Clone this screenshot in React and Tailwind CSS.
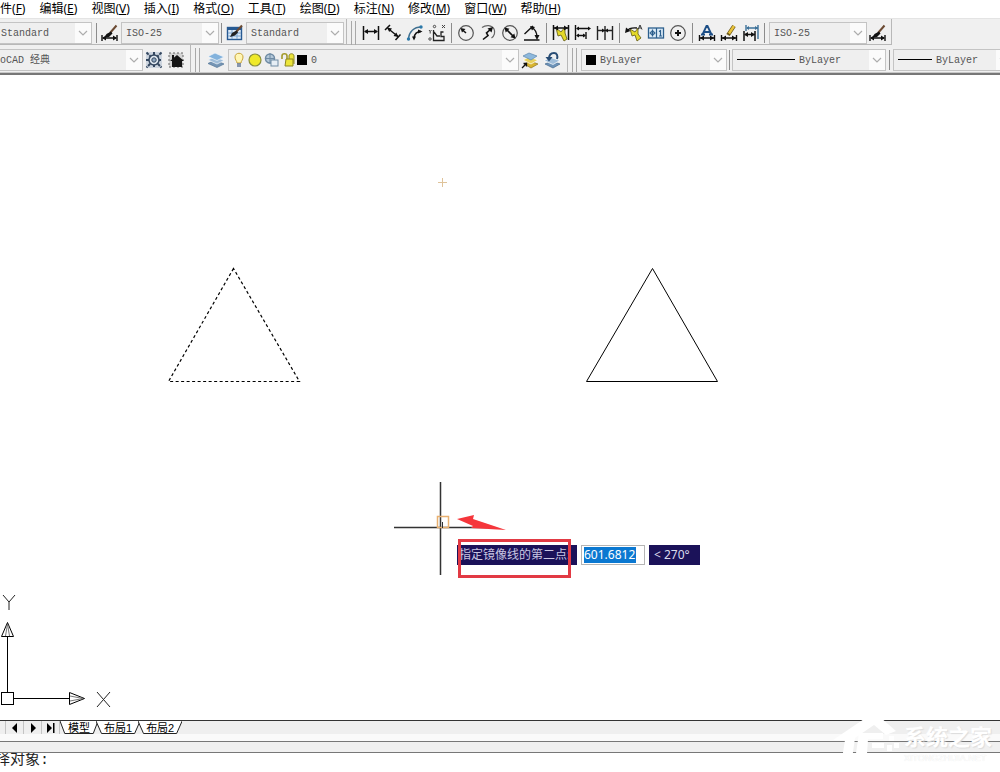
import { useState } from 'react';
import clsx from 'clsx';

const MENUS = [
  { label: '文件', key: 'F' },
  { label: '编辑', key: 'E' },
  { label: '视图', key: 'V' },
  { label: '插入', key: 'I' },
  { label: '格式', key: 'O' },
  { label: '工具', key: 'T' },
  { label: '绘图', key: 'D' },
  { label: '标注', key: 'N' },
  { label: '修改', key: 'M' },
  { label: '窗口', key: 'W' },
  { label: '帮助', key: 'H' },
];

const TABS = ['模型', '布局1', '布局2'];

// 18x18 toolbar glyphs
const ICONS = {
  dimStyle: (
    <>
      <path d="M1 11v6M16 11v6M2 14h13" stroke="#111" strokeWidth="1.4" />
      <path d="M1 14l4-2.5v5zM16 14l-4-2.5v5z" fill="#111" />
      <path d="M15.500 1.500L9 9" stroke="#6b4a32" strokeWidth="2" />
      <path d="M10 7.500L5.500 10 3 14l5-1 3.500-3.500z" fill="#111" />
    </>
  ),
  tableStyle: (
    <>
      <rect x="1.500" y="3.500" width="14" height="12" fill="#dceaf8" stroke="#285a92" strokeWidth="1.400" />
      <path d="M1.500 5h14" stroke="#285a92" strokeWidth="2" />
      <path d="M2 9h13M2 12h13M6 6v9M11 6v9" stroke="#7ba4cf" />
      <path d="M16 1.500L10 8" stroke="#6b4a32" strokeWidth="2" />
      <path d="M10.500 6.500L6 9l-2 4 5-1.500 3-3z" fill="#222" />
    </>
  ),
  linear: (
    <>
      <path d="M1.500 2v14M16.500 2v14" stroke="#111" strokeWidth="1.500" />
      <path d="M3 7.500h12" stroke="#111" strokeWidth="1.500" />
      <path d="M2 7.500l4-2.500v5zM16 7.500l-4-2.500v5z" fill="#111" />
    </>
  ),
  aligned: (
    <>
      <path d="M6 1L1 6M16.500 10.500l-5 5.500M4 4.500l10 8" stroke="#111" strokeWidth="1.500" />
      <path d="M3 3.500l5 1-2.800 3.500zM14.500 13l-5-1 2.800-3.500z" fill="#111" />
    </>
  ),
  arcLength: (
    <>
      <path d="M2.500 14.500C3 8 8 3 15 3" stroke="#3f6f8f" strokeWidth="1.300" />
      <path d="M8 14C8.500 10 11 7.500 15 7.500" stroke="#111" strokeWidth="1.500" />
      <path d="M6 12.500h4l-2 4zM12 5.500l4.500 2-4.500 2z" fill="#111" />
      <circle cx="2.500" cy="15" r="1.700" fill="#2b78a8" />
      <circle cx="15" cy="3" r="1.700" fill="#2b78a8" />
    </>
  ),
  ordinate: (
    <>
      <path d="M5.500 6v10.500H16v-4h-3V8h2.500M6 8l3 4h3" stroke="#222" strokeWidth="1.300" />
      <circle cx="6.500" cy="2.500" r="1.200" stroke="#444" />
      <circle cx="2" cy="15" r="1.200" stroke="#444" />
      <path d="M14 1l3 3M17 1l-3 3M1 6l1.200 1.500L3.500 6M2.200 7.500v2" stroke="#444" />
    </>
  ),
  radius: (
    <>
      <circle cx="9" cy="9" r="7.300" stroke="#555" strokeWidth="1.200" />
      <path d="M9 9L5 5.500" stroke="#111" strokeWidth="1.500" />
      <path d="M3.500 4l5 1-3.500 3.500z" fill="#111" />
    </>
  ),
  jogged: (
    <>
      <path d="M3 3.500C7 .5 13 1 15 5c1.500 3 .5 7-2.500 9" stroke="#666" strokeWidth="1.200" />
      <path d="M4 15.500l5-4-1.500-2.500L12 5" stroke="#111" strokeWidth="1.600" />
      <path d="M14 3l-1.500 5.500-4-4z" fill="#111" />
    </>
  ),
  diameter: (
    <>
      <circle cx="9" cy="9" r="7.300" stroke="#555" strokeWidth="1.200" />
      <path d="M5 5l8 8" stroke="#111" strokeWidth="1.600" />
      <path d="M3.500 3.500l5 1.200-3.800 3.800zM14.500 14.500l-5-1.200 3.800-3.800z" fill="#111" />
    </>
  ),
  angular: (
    <>
      <path d="M1 16h15.500M1.500 10L10 2" stroke="#111" strokeWidth="1.400" />
      <path d="M8.500 3.500c3.500 1.500 5.500 5 5.500 10" stroke="#111" strokeWidth="1.300" />
      <path d="M7 2l5 1-3 3.500zM11.500 11h5L14 16z" fill="#111" />
    </>
  ),
  quickDim: (
    <>
      <path d="M4 4l5 4 4-5v6l2 6-3 2-3-6-3 1z" fill="#e4d928" stroke="#5e5712" strokeWidth=".8" />
      <path d="M1.500 1v15M16.500 1v15M2 4h14" stroke="#111" strokeWidth="1.500" />
      <path d="M2 4l4-2.500v5zM16 4l-4-2.500v5z" fill="#111" />
    </>
  ),
  baseline: (
    <>
      <path d="M1.500 1v15M12 8v7M3 4.500h12M3 11.500h8" stroke="#111" strokeWidth="1.400" />
      <path d="M2 4.500l3-2v4zM17 4.500l-3-2v4zM2 11.500l3-2v4zM12 11.500l-3-2v4z" fill="#111" />
    </>
  ),
  continued: (
    <>
      <path d="M1.500 2v14M9 2v14M16.500 2v14M2 6.500h14" stroke="#222" strokeWidth="1.400" />
      <path d="M9 6.500l-3-2v4zM9 6.500l3-2v4z" fill="#111" />
    </>
  ),
  leader: (
    <>
      <path d="M5 5l5 3 3-4v6l3 4-4 3-2-6-3 1z" fill="#e4d928" stroke="#5e5712" strokeWidth=".8" />
      <path d="M2 7C4 4 7 3.500 12 4" stroke="#111" strokeWidth="1.500" />
      <path d="M0 9l1-5.500L5.500 7z" fill="#111" />
      <path d="M13 5.500l2-4.500 2 4.500M14 4h2" stroke="#333" />
    </>
  ),
  tolerance: (
    <>
      <rect x="1.500" y="4" width="15" height="10" fill="#dcecf8" stroke="#2c5f8d" strokeWidth="1.300" />
      <path d="M9.500 4v10M5.500 5.500v7M2.500 9h6M12 7.500l1.500-1v6M12 12h3" stroke="#2c5f8d" strokeWidth="1.200" />
      <circle cx="5.500" cy="9" r="2" stroke="#2c5f8d" />
    </>
  ),
  centerMark: (
    <>
      <circle cx="9" cy="9" r="7.300" stroke="#555" strokeWidth="1.200" />
      <path d="M9 6v6M6 9h6" stroke="#111" strokeWidth="2" />
    </>
  ),
  dimEdit: (
    <>
      <path d="M1.500 11v6M16.500 11v6M2 14h14" stroke="#111" strokeWidth="1.400" />
      <path d="M2 14l4-2.500v5zM16 14l-4-2.500v5z" fill="#111" />
      <path d="M4.500 10.500L8.500 2h1l4 8.500M6 8h6M3 10.500h4M11 10.500h4" stroke="#1d4f87" strokeWidth="1.800" />
    </>
  ),
  dimTextEdit: (
    <>
      <path d="M1.500 11v6M16.500 11v6M2 14h14" stroke="#111" strokeWidth="1.400" />
      <path d="M2 14l4-2.500v5zM16 14l-4-2.500v5z" fill="#111" />
      <path d="M14 2L8 11" stroke="#6e5a1a" strokeWidth="4" />
      <path d="M14 2L9 9.500" stroke="#e9c33a" strokeWidth="2.400" />
    </>
  ),
  dimUpdate: (
    <>
      <path d="M4 1v6M16 1v14M5 4h11" stroke="#3c7199" strokeWidth="1.400" />
      <path d="M4 4l3-2v4zM16 4l-3-2v4z" fill="#3c7199" />
      <path d="M2 7v10M13 7v10M3 10.500h10" stroke="#111" strokeWidth="1.500" />
      <path d="M2 10.500l4-2.500v5zM13 10.500l-4-2.500v5z" fill="#111" />
    </>
  ),
  gear: (
    <>
      <rect x="1" y="1" width="16" height="16" fill="#cdd5df" />
      <path d="M1.500 1.500l15 15M16.500 1.500l-15 15M9 1v16M1 9h16" stroke="#34475f" strokeWidth="2" strokeDasharray="3 1" />
      <circle cx="9" cy="9" r="5" fill="#dfe7ef" stroke="#34475f" strokeWidth="1.500" />
      <circle cx="9" cy="9" r="2.200" fill="#8fa7c0" stroke="#34475f" />
    </>
  ),
  home: (
    <>
      <rect x="2" y="2" width="14" height="14" fill="#d4d4d4" stroke="#666" strokeDasharray="2 2" />
      <path d="M10 4l7 6h-2v6H5v-6H3z" fill="#151515" />
      <path d="M5 4h2v4H5z" fill="#151515" />
    </>
  ),
  layers: (
    <>
      <path d="M1 12.500L8 9l9 4-7 3.500z" fill="#7595b5" stroke="#557798" strokeWidth=".7" />
      <path d="M1 9L8 5.500l9 4L10 13z" fill="#9fbdd9" stroke="#f2f6fa" strokeWidth=".7" />
      <path d="M1 5.500L8 2l9 4-7 3.500z" fill="#83b2dc" stroke="#f2f6fa" strokeWidth=".7" />
    </>
  ),
  layerCurrent: (
    <>
      <path d="M3 13l6-3 8 3-7 4z" fill="#d8b42f" stroke="#8d7420" strokeWidth=".7" />
      <path d="M2 9l6-3 9 3-7 4z" fill="#e8d15c" stroke="#fff" strokeWidth=".7" />
      <path d="M2 5l6-3 8 3-6 4z" fill="#8db8dc" stroke="#5b87ad" strokeWidth=".7" />
      <path d="M1 17l4-4M2.500 12.500H5.500V15.500" stroke="#111" strokeWidth="1.300" />
    </>
  ),
  layerPrevious: (
    <>
      <path d="M2 13l7-3 8 3-7 4z" fill="#6d93b8" stroke="#44698e" strokeWidth=".7" />
      <path d="M1 9.500l7-3 9 3-7 4z" fill="#9fbdd9" stroke="#fff" strokeWidth=".7" />
      <path d="M6 8C6 4 8 2 11 2c3 0 4 3 3 6" stroke="#284c74" strokeWidth="2" />
      <path d="M2.500 6h7L6 10.500z" fill="#284c74" />
    </>
  ),
};

const ICON_LABELS = {
  linear: '线性', aligned: '对齐', arcLength: '弧长', ordinate: '坐标',
  radius: '半径', jogged: '折弯', diameter: '直径', angular: '角度',
  quickDim: '快速标注', baseline: '基线', continued: '连续',
  leader: '快速引线', tolerance: '公差', centerMark: '圆心标记',
  dimEdit: '编辑标注', dimTextEdit: '编辑标注文字', dimUpdate: '标注更新',
};

const DIM_GROUPS = [
  ['linear', 'aligned', 'arcLength', 'ordinate'],
  ['radius', 'jogged', 'diameter', 'angular'],
  ['quickDim', 'baseline', 'continued'],
  ['leader', 'tolerance', 'centerMark'],
  ['dimEdit', 'dimTextEdit', 'dimUpdate'],
];

const IconButton = ({ icon, label }) => (
  <button type="button" aria-label={label} title={label} className="shrink-0 hover:bg-sky-100">
    <svg viewBox="0 0 18 18" className="block size-[18px]" fill="none" aria-hidden="true">
      {ICONS[icon]}
    </svg>
  </button>
);

const Divider = ({ className = 'mx-1' }) => (
  <span className={clsx('h-5 w-px shrink-0 bg-[#8c8c8c]', className)} />
);

const Grip = () => (
  <span className="mx-1 flex h-6 w-[5px] shrink-0 justify-between">
    <span className="w-px bg-[#a8a8a8]" />
    <span className="w-px bg-[#a8a8a8]" />
  </span>
);

// Drop-down with a flat frame and optional glyphs before the value
const Combo = ({ label, options, className, children }) => (
  <div className={clsx('relative flex h-[22px] shrink-0 items-center border border-[#c4c4c4] bg-[#efefef] pl-1', className)}>
    {children}
    <select
      aria-label={label}
      className="h-full min-w-0 flex-1 appearance-none bg-transparent pt-px font-['Liberation_Mono','Noto_Sans_CJK_SC',monospace] text-[10px] text-[#555] outline-none"
    >
      {options.map(option => (
        <option key={option}>{option}</option>
      ))}
    </select>
    <span className="pointer-events-none absolute inset-y-0 right-0 flex w-4 items-center justify-center bg-[#fbfbfb]">
      <svg viewBox="0 0 10 6" className="h-[6px] w-[10px]" fill="none" aria-hidden="true">
        <path d="M1 1l4 4 4-4" stroke="#adadad" strokeWidth="1.200" />
      </svg>
    </span>
  </div>
);

const MenuBar = () => (
  <nav className="-ml-3 flex h-[18px] items-center gap-[14px] bg-white font-['Noto_Sans','Noto_Sans_CJK_SC',sans-serif] text-xs whitespace-nowrap">
    {MENUS.map(menu => (
      <button key={menu.key} type="button" className="leading-[18px]">
        {menu.label}(<u>{menu.key}</u>)
      </button>
    ))}
  </nav>
);

const StylesToolbar = () => (
  <div className="flex h-[27px] items-center border-t border-[#e4e4e4]">
    <div className="flex h-full items-center border-r border-b border-[#b8b8b8] pt-[2px]">
      <Combo label="文字样式" options={['Standard']} className="-ml-1 w-24" />
      <Divider />
      <IconButton icon="dimStyle" label="标注样式" />
      <Combo label="标注样式" options={['ISO-25']} className="ml-[2px] w-[98px]" />
      <Divider className="mr-1 ml-[2px]" />
      <IconButton icon="tableStyle" label="表格样式" />
      <Combo label="表格样式" options={['Standard']} className="mr-[2px] ml-[2px] w-[98px]" />
    </div>
    <div className="flex h-full items-center border-r border-b border-[#b8b8b8] pt-[2px] pr-1">
      <Grip />
      {DIM_GROUPS.map((group, index) => (
        <div key={group[0]} className="flex items-center">
          {index > 0 && <Divider className="mx-[5px]" />}
          <div className={clsx('flex gap-1', index === 0 && 'pl-[2px]')}>
            {group.map(icon => (
              <IconButton key={icon} icon={icon} label={ICON_LABELS[icon]} />
            ))}
          </div>
        </div>
      ))}
      <Divider />
      <Combo label="标注样式控制" options={['ISO-25']} className="mr-[2px] w-[98px]" />
      <IconButton icon="dimStyle" label="标注样式" />
    </div>
  </div>
);

const LayerGlyphs = () => (
  <svg viewBox="0 0 78 18" className="h-[18px] w-[78px] shrink-0" fill="none" aria-hidden="true">
    <path d="M4 12c0-2-2-3-2-6 0-5 8-5 8 0 0 3-2 4-2 6z" fill="#fff6b5" stroke="#c8a338" />
    <path d="M4 13h4M4 15h4" stroke="#667a99" strokeWidth="1.600" />
    <circle cx="22" cy="9" r="6" fill="#efe92a" stroke="#8a8f3c" strokeWidth="1.200" />
    <circle cx="37" cy="7.500" r="4.500" fill="#b3c7d8" stroke="#6f8ba4" strokeWidth="1.500" />
    <path d="M37 2v11M32 7.500h10" stroke="#6f8ba4" />
    <rect x="38" y="9" width="7" height="6" fill="#e6eef5" stroke="#6f8ba4" />
    <path d="M49 8V5c0-3 5-3 5 0v4" stroke="#a39a2a" strokeWidth="1.600" />
    <path d="M53 8h7v7h-8zM56 8V5c0-3 5-3 5 0v8" fill="#ece53a" stroke="#8d8622" />
    <rect x="64" y="4" width="10" height="10" fill="#000" />
  </svg>
);

const LayersToolbar = () => (
  <div className="flex h-7 items-center border-b border-[#c8c8c8]">
    <div className="flex h-full items-center border-r border-[#b8b8b8] pt-[2px] pr-[5px]">
      <Combo label="工作空间" options={['AutoCAD 经典']} className="-ml-[23px] w-[166px]" />
      <div className="flex gap-1 pl-[2px]">
        <IconButton icon="gear" label="工作空间设置" />
        <IconButton icon="home" label="我的工作空间" />
      </div>
    </div>
    <div className="flex h-full items-center border-r border-[#b8b8b8] pt-[2px] pr-[6px]">
      <Grip />
      <div className="flex px-[3px]">
        <IconButton icon="layers" label="图层特性管理器" />
      </div>
      <Combo label="图层" options={['0']} className="w-[291px]">
        <LayerGlyphs />
      </Combo>
      <div className="flex gap-1 pl-[2px]">
        <IconButton icon="layerCurrent" label="置为当前" />
        <IconButton icon="layerPrevious" label="上一个图层" />
      </div>
    </div>
    <div className="flex h-full items-center pt-[2px]">
      <Grip />
      <Combo label="颜色" options={['ByLayer']} className="w-[146px]">
        <span className="mr-1 size-[10px] bg-black" />
      </Combo>
      <Divider className="mx-[2px]" />
      <Combo label="线型" options={['ByLayer']} className="w-[154px]">
        <span className="mr-1 h-px w-[58px] bg-black" />
      </Combo>
      <Divider className="mx-[3px]" />
      <Combo label="线宽" options={['ByLayer']} className="w-[120px]">
        <span className="mr-1 h-px w-[34px] bg-black" />
      </Combo>
    </div>
  </div>
);

const Drawing = () => (
  <svg className="absolute inset-0 size-full" fill="none" stroke="#000" aria-hidden="true">
    {/* Source triangle (selected) and its mirrored copy */}
    <path d="M233.500 193.500L168.500 306.500H299.500z" strokeWidth="1.200" strokeDasharray="3 2.500" />
    <path d="M652.500 193.500L586.500 306.500H717.500z" />
    <path d="M438 107.500h9M442.500 103v9" stroke="#dfc39a" />

    {/* Crosshair */}
    <path d="M394 452.500h93M440.500 407v93" stroke="#333" strokeWidth="1.500" />
    <rect x="437.500" y="441.500" width="11" height="11" stroke="#e8b070" strokeWidth="1.500" />
    <path d="M442.500 447v6" stroke="#333" />

    {/* UCS icon */}
    <rect x="1.500" y="617.500" width="12" height="12" />
    <path d="M7.500 617V561M14 623.500h55M1.500 561.500l6-14 6 14zM69.500 617.500l15 6-15 6z" />
    <path d="M5.500 561l2-12 2 12M70 621l13 2.500-13 2.500" stroke="#777" />
    <path d="M3 520l6 7 6-7M9 527v8M97 617l13 15M110 617l-13 15" stroke="#222" />
  </svg>
);

const Annotation = () => (
  <svg className="pointer-events-none absolute inset-0 size-full" fill="none" aria-hidden="true">
    <rect x="459.500" y="465.500" width="110" height="36" stroke="#e23a44" strokeWidth="3" />
    <path d="M457 444l17-4-1 4 33 11-35-2 2-2z" fill="#f5363b" />
  </svg>
);

const DynamicInput = () => {
  const [distance, setDistance] = useState('601.6812');

  return (
    <div className="absolute top-[470px] left-[457px] flex h-5 items-center gap-1 font-['Noto_Sans','Noto_Sans_CJK_SC',sans-serif] text-xs whitespace-nowrap">
      <label htmlFor="distance" className="h-5 w-[120px] bg-[#1b1259] pl-[2px] leading-5 text-[#c9c6e2]">
        指定镜像线的第二点:
      </label>
      <span className="flex h-5 w-16 items-center border border-[#b5b5b5] bg-white pl-[2px]">
        <input
          id="distance"
          value={distance}
          onChange={event => setDistance(event.target.value)}
          className="h-4 w-[52px] bg-[#0b78d1] leading-4 text-white outline-none"
        />
      </span>
      <span className="h-5 w-[51px] bg-[#1b1259] pl-[5px] leading-5 text-[#dcdaec]">&lt; 270°</span>
    </div>
  );
};

const NavButton = ({ label, path }) => (
  <button type="button" aria-label={label} className="flex h-full w-[18px] items-center justify-center border-r border-[#c4c4c4]">
    <svg viewBox="0 0 10 10" className="size-[10px]" aria-hidden="true">
      <path d={path} fill="#000" />
    </svg>
  </button>
);

const LayoutTabs = () => {
  const [active, setActive] = useState('模型');

  return (
    <div className="flex h-[14px] border-t border-[#333] bg-[#efefef]">
      <div className="ml-[5px] flex border-l border-[#c4c4c4]">
        <NavButton label="上一个" path="M7 0v10L2 5z" />
        <NavButton label="下一个" path="M3 0v10l5-5z" />
        <NavButton label="最后一个" path="M1 0v10l5-5zM7 0h1.500v10H7z" />
      </div>
      <div role="tablist" className="flex">
        {TABS.map(tab => (
          <button
            key={tab}
            type="button"
            role="tab"
            aria-selected={active === tab}
            onClick={() => setActive(tab)}
            className="relative -mr-[2px] px-2 text-[11px] leading-[12px] whitespace-nowrap"
          >
            <svg viewBox="0 0 40 13" preserveAspectRatio="none" className="absolute inset-0 size-full" aria-hidden="true">
              <path d="M0 0l5 12.500h30L40 0" fill="#fff" stroke="#222" vectorEffect="non-scaling-stroke" />
            </svg>
            <span className="relative">{tab}</span>
          </button>
        ))}
      </div>
    </div>
  );
};

const Watermark = () => (
  <div className="pointer-events-none absolute right-2 bottom-2 flex items-end">
    <svg viewBox="0 0 72 48" className="h-12 w-[72px]" fill="none" aria-hidden="true">
      <path d="M1 24L35 1h13l16 14-10 4-12-10L23 22l-3 21H10l3-19z" fill="#fff" />
      <path d="M27 17h24v6H36l-1 15h16v6H23z" fill="#fff" />
      <path d="M40 27h12v5H40zM57 20h5v5h-5zM55 29h5v6h-5zM62 27h5v5h-5zM59 38h5v5h-5z" fill="#fff" />
    </svg>
    <div className="text-white">
      <p className="text-[22px] leading-7 font-bold [text-shadow:1px_1px_1px_#dcdcdc]">系统之家</p>
      <p className="font-['Liberation_Sans',sans-serif] text-[9px] leading-3 [text-shadow:0_0_1px_#ddd]">XITONGZHIJIA.NET</p>
    </div>
  </div>
);

const App = () => (
  <div className="relative flex min-h-screen flex-col overflow-hidden bg-[#f0f0f0] font-['Liberation_Sans','Noto_Sans_CJK_SC',sans-serif] text-black">
    <header className="overflow-hidden border-b-2 border-[#777]">
      <MenuBar />
      <StylesToolbar />
      <LayersToolbar />
    </header>

    <main className="relative flex-1 bg-white">
      <Drawing />
      <DynamicInput />
      <Annotation />
    </main>

    <footer>
      <LayoutTabs />
      <div className="h-[7px] bg-[#fafafa]" />
      <div className="h-[12px] border-y border-[#777] bg-[#f0f0f0]" />
      <div className="flex h-[19px] overflow-hidden bg-white">
        <label htmlFor="command" className="-ml-5 font-['Liberation_Mono','Noto_Sans_CJK_SC',monospace] text-[15px] leading-4 whitespace-nowrap text-[#222]">
          选择对象:
        </label>
        <input id="command" className="min-w-0 flex-1 bg-transparent text-sm outline-none" />
      </div>
    </footer>
    <Watermark />
  </div>
);

export default App;
